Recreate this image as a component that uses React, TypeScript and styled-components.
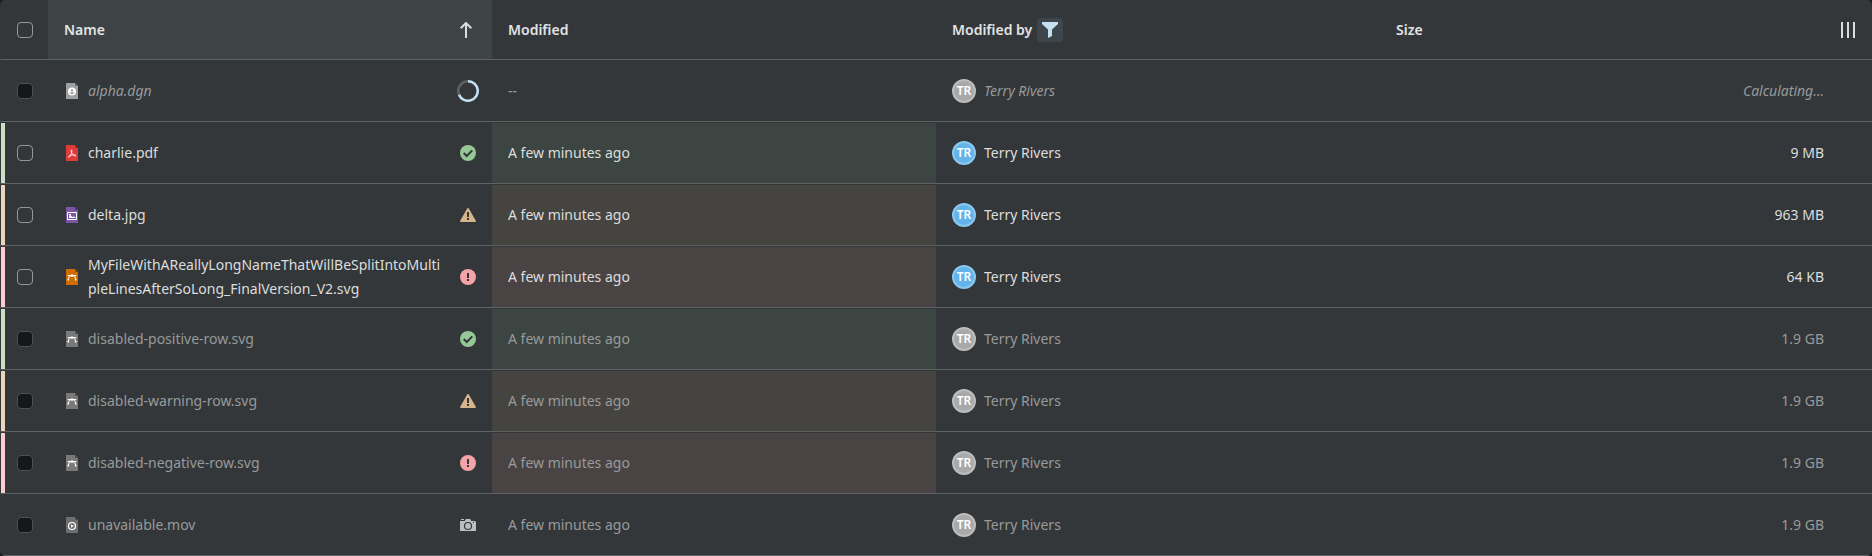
import React from 'react';
import styled, { createGlobalStyle, css } from 'styled-components';

type Status = 'positive' | 'warning' | 'negative';
type Trailing = 'loading' | 'camera' | Status;
type FileKind = 'dgn' | 'pdf' | 'jpg' | 'svg' | 'mov';

interface FileRow {
  name: string;
  kind: FileKind;
  modified: string;
  by: string;
  size: string;
  trailing: Trailing;
  status?: Status;
  disabled?: boolean;
  loading?: boolean;
}

const longName = 'MyFileWithAReallyLongNameThatWillBeSplitIntoMultipleLinesAfterSoLong_FinalVersion_V2.svg';

const files: FileRow[] = [
  { name: 'alpha.dgn', kind: 'dgn', modified: '--', by: 'Terry Rivers', size: 'Calculating…', trailing: 'loading', disabled: true, loading: true },
  { name: 'charlie.pdf', kind: 'pdf', modified: 'A few minutes ago', by: 'Terry Rivers', size: '9 MB', trailing: 'positive', status: 'positive' },
  { name: 'delta.jpg', kind: 'jpg', modified: 'A few minutes ago', by: 'Terry Rivers', size: '963 MB', trailing: 'warning', status: 'warning' },
  { name: longName, kind: 'svg', modified: 'A few minutes ago', by: 'Terry Rivers', size: '64 KB', trailing: 'negative', status: 'negative' },
  { name: 'disabled-positive-row.svg', kind: 'svg', modified: 'A few minutes ago', by: 'Terry Rivers', size: '1.9 GB', trailing: 'positive', status: 'positive', disabled: true },
  { name: 'disabled-warning-row.svg', kind: 'svg', modified: 'A few minutes ago', by: 'Terry Rivers', size: '1.9 GB', trailing: 'warning', status: 'warning', disabled: true },
  { name: 'disabled-negative-row.svg', kind: 'svg', modified: 'A few minutes ago', by: 'Terry Rivers', size: '1.9 GB', trailing: 'negative', status: 'negative', disabled: true },
  { name: 'unavailable.mov', kind: 'mov', modified: 'A few minutes ago', by: 'Terry Rivers', size: '1.9 GB', trailing: 'camera', disabled: true },
];

const barColor: Record<Status, string> = { positive: '#cae0c4', warning: '#ecd5bc', negative: '#fbcdce' };
const cellColor: Record<Status, string> = { positive: '#3c4541', warning: '#454441', negative: '#494344' };
const iconColor: Record<Status, string> = { positive: '#96c796', warning: '#d6b48c', negative: '#f4a3a6' };
const fileColor: Record<FileKind, string> = { dgn: '#a0a0a0', pdf: '#df3b38', jpg: '#7d55a5', svg: '#d06b00', mov: '#6f6f6f' };

const line = '#5d6264';
const surface = '#33373a';

const GlobalStyle = createGlobalStyle`
  *, *::before, *::after { box-sizing: border-box; }
  body {
    margin: 0;
    background: #1b1c1d;
    color: #dcdddd;
    font-family: "Noto Sans", "Open Sans", sans-serif;
    font-size: 14px;
    line-height: 24px;
  }
`;

const Table = styled.table`
  width: 100%;
  table-layout: fixed;
  border-collapse: separate;
  border-spacing: 0;
  background: ${surface};
  border-radius: 5px;
  overflow: hidden;
`;

const Col = styled.col<{ $narrow?: boolean }>`
  ${(p) => p.$narrow && 'width: 48px;'}
`;

const HeadCell = styled.th<{ $sorted?: boolean }>`
  height: 60px;
  padding: 0 16px;
  border-bottom: 1px solid ${line};
  background: ${(p) => (p.$sorted ? '#3e4345' : 'transparent')};
  text-align: left;
  font-weight: 600;
  color: #e2e3e3;
`;

const SelectHeadCell = styled(HeadCell)`
  padding: 0 0 0 16px;
  border-left: 1px solid transparent;
`;

const HeadContent = styled.div<{ $spread?: boolean }>`
  display: flex;
  align-items: center;
  justify-content: ${(p) => (p.$spread ? 'space-between' : 'flex-start')};
  gap: 5px;
`;

const IconButton = styled.button<{ $active?: boolean; $pad?: number }>`
  display: flex;
  align-items: center;
  justify-content: center;
  height: 24px;
  padding: 0 ${(p) => p.$pad ?? 0}px;
  border: 0;
  border-radius: 4px;
  background: ${(p) => (p.$active ? '#3e454b' : 'transparent')};
  color: ${(p) => (p.$active ? '#c3e1f3' : '#dcdddd')};
`;

const Row = styled.tr<{ $disabled?: boolean; $loading?: boolean }>`
  color: ${(p) => (p.$disabled ? '#989a9b' : '#dcdddd')};
  font-style: ${(p) => (p.$loading ? 'italic' : 'normal')};
`;

const Cell = styled.td<{ $status?: Status; $right?: boolean }>`
  height: 62px;
  padding: 0 16px;
  border-top: 1px solid transparent;
  border-bottom: 1px solid ${line};
  background-color: ${(p) => (p.$status ? cellColor[p.$status] : 'transparent')};
  background-clip: padding-box;
  ${(p) =>
    p.$right &&
    css`
      padding-right: 0;
      text-align: right;
    `}
`;

const SelectCell = styled(Cell)<{ $bar?: Status }>`
  padding: 0 0 0 16px;
  border-left: 1px solid transparent;
  ${(p) => p.$bar && `box-shadow: inset 4px 0 ${barColor[p.$bar]};`}
`;

const Checkbox = styled.input`
  display: block;
  appearance: none;
  width: 16px;
  height: 16px;
  margin: 0;
  border: 1px solid #95989a;
  border-radius: 4px;
  background: ${surface};
  &:disabled {
    border-color: #4b5154;
    background: #151718;
  }
`;

const NameContent = styled.div`
  display: flex;
  align-items: center;
`;

const FileName = styled.span`
  flex: 1;
  min-width: 0;
  margin: 0 16px 0 8px;
  overflow-wrap: anywhere;
`;

const Trail = styled.span`
  display: flex;
  justify-content: center;
  width: 16px;
`;

const Person = styled.div`
  display: flex;
  align-items: center;
  gap: 8px;
`;

const Avatar = styled.abbr<{ $muted?: boolean }>`
  display: grid;
  place-items: center;
  width: 24px;
  height: 24px;
  border-radius: 50%;
  border: 2px solid ${(p) => (p.$muted ? '#bdbdbd' : '#8bc8ef')};
  background: ${(p) => (p.$muted ? '#a9a9a9' : '#64b4ec')};
  color: #fff;
  font-size: 12px;
  font-style: normal;
  font-weight: 600;
  line-height: 20px;
`;

const Glyph = styled.svg<{ $size?: number }>`
  display: block;
  flex: none;
  width: ${(p) => p.$size ?? 16}px;
  height: ${(p) => p.$size ?? 16}px;
`;

const marks: Record<FileKind, React.ReactNode> = {
  dgn: (
    <>
      <circle cx="8" cy="8.5" r="4" fill="#fff" />
      <path d="M8 6v4.600M6 9.200c.3 1 1 1.500 2 1.500s1.700-.5 2-1.500M7.200 7.500h1.600" fill="none" stroke="#8d8d8d" />
    </>
  ),
  pdf: (
    <path
      d="M7.500 4.800c-.7.200-.3 1.800.2 3 .7 1.700 1.800 2.700 3.500 3.200.8.100.9-.8.200-1-1.800-.4-4.500 0-5.800.8-1 .6-1.400 1.400-.8 1.500.8 0 2.200-2.400 2.800-4.500.4-1.500.5-3-.1-3z"
      fill="none"
      stroke="#fff"
      strokeWidth="0.8"
    />
  ),
  jpg: (
    <>
      <path d="M3.500 5.500h9v7h-9z" fill="none" stroke="#fff" />
      <path d="M5 11V9.500l1.500-1 2 1.500 1.500-.5 1.500 1v.5zM5 7h2v1.500H5z" fill="#fff" />
    </>
  ),
  svg: (
    <>
      <path d="M4.300 10.500c.2-2.300 1.500-3.700 3.700-3.700s3.500 1.400 3.700 3.700M4.500 6.500h7" fill="none" stroke="#fff" />
      <path d="M7 5.500h2v2H7zM3.500 10h1.600v1.600H3.500zM10.900 10h1.600v1.600h-1.600zM3.700 5.900H5v1.300H3.700zM11 5.900h1.300v1.300H11z" fill="#fff" />
    </>
  ),
  mov: (
    <>
      <circle cx="8" cy="9" r="3.500" fill="none" stroke="#fff" strokeWidth="1.200" />
      <path d="M7 7.200v3.600L9.800 9z" fill="#fff" />
    </>
  ),
};

const FileIcon = ({ kind, disabled }: { kind: FileKind; disabled?: boolean }) => (
  <Glyph viewBox="0 0 16 16" aria-hidden="true">
    <path d="M2 0h9l3 3v13H2z" fill={disabled && kind === 'svg' ? '#797979' : fileColor[kind]} />
    <path d="M11 0v3h3z" fill="#000" opacity="0.3" />
    {marks[kind]}
  </Glyph>
);

const TrailingIcon = ({ type }: { type: Trailing }) => {
  switch (type) {
    case 'loading':
      return (
        <Glyph $size={22} viewBox="0 0 22 22" role="progressbar" aria-label="Loading">
          <circle cx="11" cy="11" r="9.75" fill="none" stroke="#5d6264" strokeWidth="2.5" />
          <path d="M11 1.250a9.750 9.750 0 1 1-9 13.500" fill="none" stroke="#c3e1f3" strokeWidth="2.5" />
        </Glyph>
      );
    case 'positive':
      return (
        <Glyph viewBox="0 0 16 16" aria-label="Positive">
          <circle cx="8" cy="8" r="8" fill={iconColor.positive} />
          <path d="M3.700 8l3 3 5.600-5.600" fill="none" stroke={surface} strokeWidth="2" />
        </Glyph>
      );
    case 'warning':
      return (
        <Glyph viewBox="0 0 16 16" aria-label="Warning">
          <path d="M8 1c.3 0 .6.200.8.500l7 12.200c.4.700 0 1.300-.7 1.300H.9c-.7 0-1.100-.6-.7-1.300l7-12.200C7.400 1.200 7.700 1 8 1z" fill={iconColor.warning} />
          <path d="M7 5h2v5H7zM7 11h2v2H7z" fill={surface} />
        </Glyph>
      );
    case 'negative':
      return (
        <Glyph viewBox="0 0 16 16" aria-label="Negative">
          <circle cx="8" cy="8" r="8" fill={iconColor.negative} />
          <path d="M7 4h2v5H7zM7 10h2v2H7z" fill={surface} />
        </Glyph>
      );
    case 'camera':
      return (
        <Glyph viewBox="0 0 16 16" aria-label="Unavailable">
          <path d="M1 2h3v1H1zM5.800 2h4.400l1 2H15l1 1v9H0V4h4.800z" fill="#bcbdbe" />
          <circle cx="8" cy="9" r="3.500" fill="none" stroke={surface} strokeWidth="1.200" />
          <path d="M13 5h1v1h-1z" fill={surface} />
        </Glyph>
      );
  }
};

export default function App() {
  return (
    <>
      <GlobalStyle />
      <Table>
        <colgroup>
          <Col $narrow />
          <Col />
          <Col />
          <Col />
          <Col />
          <Col $narrow />
        </colgroup>
        <thead>
          <tr>
            <SelectHeadCell>
              <Checkbox type="checkbox" aria-label="Select all" />
            </SelectHeadCell>
            <HeadCell $sorted aria-sort="ascending">
              <HeadContent $spread>
                Name
                <IconButton $pad={2} aria-label="Sorted ascending">
                  <Glyph viewBox="0 0 16 16">
                    <path d="M8 16V1.500M2.700 6.300L8 1l5.300 5.300" fill="none" stroke="currentColor" strokeWidth="2" />
                  </Glyph>
                </IconButton>
              </HeadContent>
            </HeadCell>
            <HeadCell>Modified</HeadCell>
            <HeadCell>
              <HeadContent>
                Modified by
                <IconButton $active $pad={5} aria-label="Filter">
                  <Glyph viewBox="0 0 16 16">
                    <path d="M0 0h16v2l-6 5.500V14l-4 2V7.500L0 2z" fill="currentColor" />
                  </Glyph>
                </IconButton>
              </HeadContent>
            </HeadCell>
            <HeadCell>Size</HeadCell>
            <HeadCell>
              <IconButton aria-label="Column manager">
                <Glyph viewBox="0 0 16 16">
                  <path d="M1 0h2v16H1zM7 0h2v16H7zM13 0h2v16h-2z" fill="currentColor" />
                </Glyph>
              </IconButton>
            </HeadCell>
          </tr>
        </thead>
        <tbody>
          {files.map((f) => (
            <Row key={f.name} $disabled={f.disabled} $loading={f.loading}>
              <SelectCell $bar={f.status}>
                <Checkbox type="checkbox" disabled={f.disabled} aria-label={`Select ${f.name}`} />
              </SelectCell>
              <Cell>
                <NameContent>
                  <FileIcon kind={f.kind} disabled={f.disabled} />
                  <FileName>{f.name}</FileName>
                  <Trail>
                    <TrailingIcon type={f.trailing} />
                  </Trail>
                </NameContent>
              </Cell>
              <Cell $status={f.status}>{f.modified}</Cell>
              <Cell>
                <Person>
                  <Avatar $muted={f.disabled}>TR</Avatar>
                  {f.by}
                </Person>
              </Cell>
              <Cell $right>{f.size}</Cell>
              <Cell />
            </Row>
          ))}
        </tbody>
      </Table>
    </>
  );
}
